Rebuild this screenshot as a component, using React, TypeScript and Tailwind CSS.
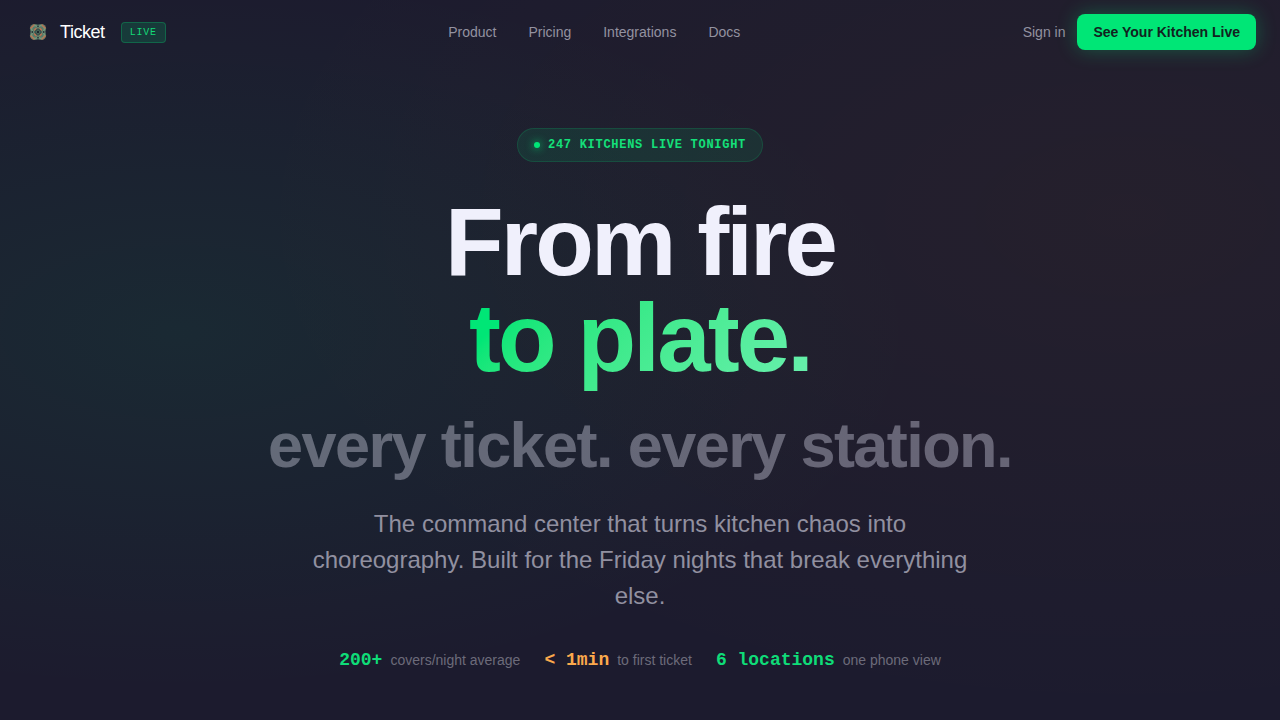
import { FC } from 'react';

const navLinks = ['Product', 'Pricing', 'Integrations', 'Docs'];

const stats = [
  { value: '200+', label: 'covers/night average', color: 'text-[#0fdc78]' },
  { value: '< 1min', label: 'to first ticket', color: 'text-[#fba94c]' },
  { value: '6 locations', label: 'one phone view', color: 'text-[#0fdc78]' },
];

const Logo: FC = () => (
  <svg viewBox="0 0 20 20" className="h-5 w-5" fill="none" aria-hidden="true">
    <g fill="#5c7a68">
      <circle cx="6.5" cy="6.5" r="4.6" />
      <circle cx="13.5" cy="6.5" r="4.6" />
      <circle cx="6.5" cy="13.5" r="4.6" />
      <circle cx="13.5" cy="13.5" r="4.6" />
      <circle cx="10" cy="10" r="7.6" />
    </g>
    <g stroke="#86b08a" strokeWidth="0.8">
      <circle cx="7" cy="7" r="3.4" />
      <circle cx="13" cy="7" r="3.4" />
      <circle cx="7" cy="13" r="3.4" />
      <circle cx="13" cy="13" r="3.4" />
    </g>
    <g stroke="#c4704f" strokeWidth="1.2" strokeLinecap="round">
      <path d="M2.8 6 6 2.8M14 2.8 17.2 6M17.2 14 14 17.2M6 17.2 2.8 14" />
      <path d="M6.5 8 8 6.5M12 6.5 13.5 8M13.5 12 12 13.5M8 13.5 6.5 12" />
    </g>
    <g fill="#26323a">
      <circle cx="10" cy="4.5" r="0.9" />
      <circle cx="10" cy="15.5" r="0.9" />
      <circle cx="4.5" cy="10" r="0.9" />
      <circle cx="15.5" cy="10" r="0.9" />
    </g>
    <path d="M10 6.5 13.5 10 10 13.5 6.5 10Z" fill="#4d6d5b" stroke="#26323a" />
    <circle cx="10" cy="10" r="1.2" fill="#1e2630" />
  </svg>
);

const Header: FC = () => (
  <header className="flex h-16 items-center justify-between px-6">
    <div className="flex items-center gap-4">
      <a href="#" className="flex items-center gap-3 pl-1 text-lg tracking-tight text-white">
        <Logo />
        Ticket
      </a>
      <span className="rounded-sm border border-[#00e676]/25 bg-[#00e676]/15 px-2 py-0.5 font-['Liberation_Mono',monospace] text-[10px] leading-[15px] tracking-[0.08em] text-[#14d977]">
        LIVE
      </span>
    </div>
    <nav className="flex gap-8 text-sm text-[#9392a0]">
      {navLinks.map((link) => (
        <a key={link} href="#" className="hover:text-white">
          {link}
        </a>
      ))}
    </nav>
    <div className="flex items-center gap-3">
      <a href="#" className="text-sm text-[#9392a0] hover:text-white">
        Sign in
      </a>
      <button
        type="button"
        className="h-9 rounded-lg bg-[#00e676] px-4 text-sm font-semibold text-[#12231f] shadow-[0_0_20px_rgba(0,230,118,0.3)]"
      >
        See Your Kitchen Live
      </button>
    </div>
  </header>
);

const Hero: FC = () => (
  <main className="flex flex-col items-center px-6 pt-16 pb-12 text-center">
    <div className="flex items-center gap-2 rounded-full border border-[#00e676]/15 bg-[#00e676]/10 px-4 py-2 font-['Liberation_Mono',monospace] text-xs font-semibold tracking-[0.06em] text-[#14e07a]">
      <span className="h-1.5 w-1.5 rounded-full bg-[#00e676] shadow-[0_0_8px_#00e676]" />
      247 KITCHENS LIVE TONIGHT
    </div>
    <h1 className="mt-8 text-8xl leading-none font-bold tracking-[-0.03em] text-[#f0f0fc]">
      From fire
      <br />
      <span className="bg-linear-135 from-[#00e676] from-15% to-[#69f0ae] bg-clip-text text-transparent">
        to plate.
      </span>
    </h1>
    <p className="mt-6 text-[63px] leading-[70px] font-bold tracking-tight text-[#eeeeff]/35">
      every ticket. every station.
    </p>
    <p className="mt-[26px] max-w-2xl text-2xl leading-9 text-[#9190a0]">
      The command center that turns kitchen chaos into choreography. Built for the Friday nights that
      break everything else.
    </p>
    <dl className="mt-8 flex flex-wrap justify-center gap-6">
      {stats.map(({ value, label, color }) => (
        <div key={value} className="flex items-center gap-2">
          <dt className={`font-['Liberation_Mono',monospace] text-lg font-bold ${color}`}>{value}</dt>
          <dd className="text-sm text-[#6c6b7a]">{label}</dd>
        </div>
      ))}
    </dl>
  </main>
);

export default function App() {
  return (
    <div className="min-h-screen bg-[#1c1b2e] bg-[radial-gradient(58%_50%_at_14%_46%,rgba(0,230,118,0.07),transparent),radial-gradient(70%_70%_at_88%_30%,rgba(255,145,0,0.04),transparent)] font-['Liberation_Sans',Arial,sans-serif]">
      <Header />
      <Hero />
    </div>
  );
}
